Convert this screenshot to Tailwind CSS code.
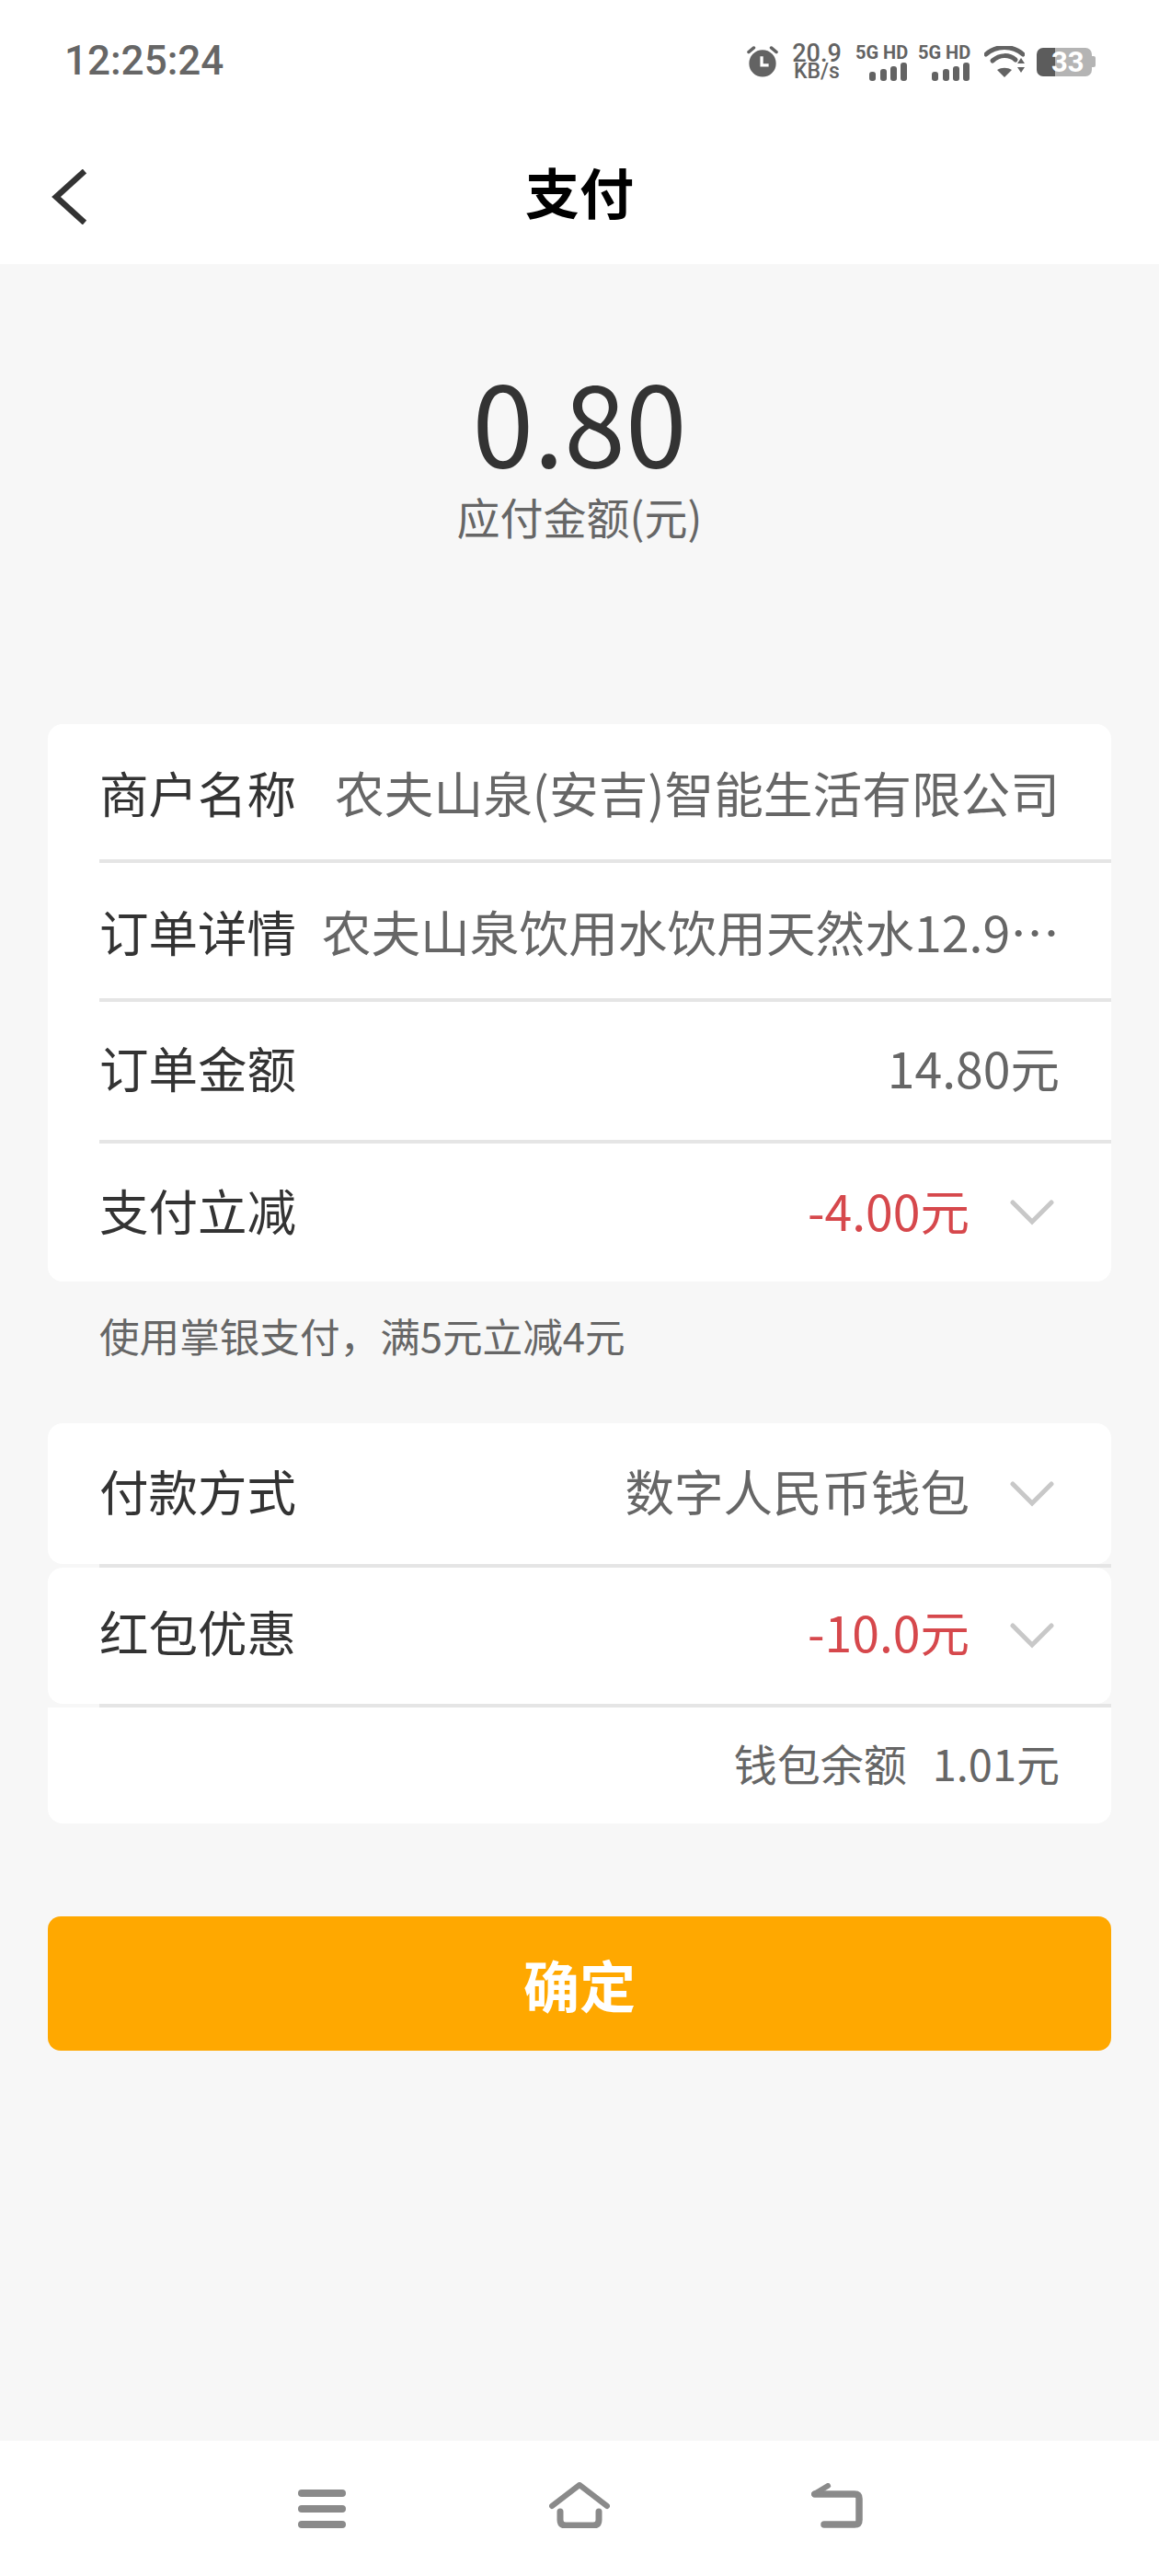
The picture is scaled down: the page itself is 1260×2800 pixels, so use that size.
<!DOCTYPE html>
<html lang="zh-CN">
<head>
  <meta charset="UTF-8" />
  <meta name="viewport" content="width=device-width, initial-scale=1" />
  <title>支付</title>
  <script src="https://cdn.jsdelivr.net/npm/@tailwindcss/browser@4"></script>
</head>
<body class="bg-[#f7f7f7] font-['Noto_Sans_CJK_SC','Noto_Sans',sans-serif]">
  <div class="w-[1260px] h-[2800px] flex flex-col overflow-hidden">
    <!-- status bar -->
    <div class="bg-white h-[132px] pl-[70px] pr-[69px] flex items-center justify-between">
      <span class="font-['Roboto',sans-serif] font-medium text-[44px] leading-none text-[#666666]">12:25:24</span>
      <div class="flex items-center text-[#636363] h-[60px] mt-[2px]">
        <svg class="w-[34px] h-[34px]" viewBox="0 0 36 36" fill="none">
          <circle cx="18" cy="20" r="15.5" fill="#636363" />
          <path d="M17 12v10h8" stroke="#fff" stroke-width="3.5" />
          <path d="M2 7l6-5M34 7l-6-5" stroke="#636363" stroke-width="3.5" stroke-linecap="round" />
        </svg>
        <div class="ml-[16px] w-[52px] flex flex-col items-center font-['Roboto',sans-serif] font-medium leading-none">
          <span class="text-[27px] h-[21px] leading-[21px]">20.9</span>
          <span class="text-[23px] h-[18px] leading-[18px]">KB/s</span>
        </div>
        <div class="ml-[16px] w-[58px] flex flex-col">
          <span class="font-['Roboto',sans-serif] font-bold text-[20px] leading-[20px] whitespace-nowrap">5G HD</span>
          <svg class="mt-[1px] ml-[15px] w-[42px] h-[20px]" viewBox="0 0 42 20" fill="#636363">
            <rect x="0" y="10" width="7" height="10" rx="3" /><rect x="12" y="7" width="7" height="13" rx="3" />
            <rect x="23" y="4" width="7" height="16" rx="3" /><rect x="34" y="0" width="7" height="20" rx="3" />
          </svg>
        </div>
        <div class="ml-[10px] w-[58px] flex flex-col">
          <span class="font-['Roboto',sans-serif] font-bold text-[20px] leading-[20px] whitespace-nowrap">5G HD</span>
          <svg class="mt-[1px] ml-[15px] w-[42px] h-[20px]" viewBox="0 0 42 20" fill="#636363">
            <rect x="0" y="10" width="7" height="10" rx="3" /><rect x="12" y="7" width="7" height="13" rx="3" />
            <rect x="23" y="4" width="7" height="16" rx="3" /><rect x="34" y="0" width="7" height="20" rx="3" />
          </svg>
        </div>
        <svg class="ml-[14px] w-[44px] h-[34px]" viewBox="0 0 44 34" fill="none">
          <path d="M2 9C13-1 31-1 42 9" stroke="#636363" stroke-width="5" stroke-linecap="round" />
          <path d="M9 16C17 9 27 9 34 15" stroke="#636363" stroke-width="5" stroke-linecap="round" />
          <path d="M14 26l8 8 8-8c-5-3-11-3-16 0z" fill="#636363" />
          <path d="M36 19l4-6 4 6zM36 23l4 6 4-6z" fill="#636363" />
        </svg>
        <div class="relative ml-[13px] w-[64px] h-[31px] flex items-center">
          <div class="w-[60px] h-[31px] rounded-[7px] overflow-hidden flex">
            <div class="w-[20px] bg-[#5c5c5c]"></div>
            <div class="flex-1 bg-[#b4b4b4]"></div>
          </div>
          <div class="w-[4px] h-[12px] rounded-r-[2px] bg-[#b4b4b4]"></div>
          <span class="absolute left-[16px] top-0 w-[30px] text-center font-['Roboto',sans-serif] font-bold text-[31px] leading-[31px] text-white">33</span>
        </div>
      </div>
    </div>

    <!-- header -->
    <div class="relative bg-white h-[155px] flex items-center justify-center">
      <svg class="absolute left-[56px] top-[52px] w-[38px] h-[60px]" viewBox="0 0 38 60" fill="none">
        <path d="M36 2L5 30l31 28" stroke="#333333" stroke-width="6.5" />
      </svg>
      <h1 class="text-[59px] leading-none font-bold text-black -mt-[4px]">支付</h1>
    </div>

    <main class="flex-1 flex flex-col">
      <!-- amount -->
      <div class="h-[500px] flex flex-col items-center pt-[106px]">
        <div class="font-normal text-[120px] leading-[126px] text-[#333333]">0.80</div>
        <div class="text-[47px] leading-[60px] text-[#666666] mt-[12px]">应付金额(元)</div>
      </div>

      <!-- order info -->
      <div class="mx-[52px] bg-white rounded-[16px] text-[#333333] text-[53.5px] leading-none">
        <div class="h-[147px] pl-[56px] pr-[56px] flex items-center justify-between">
          <span class="shrink-0">商户名称</span>
          <span class="text-[#666666] text-[53.7px] whitespace-nowrap">农夫山泉(安吉)智能生活有限公司</span>
        </div>
        <div class="ml-[56px] h-[4px] bg-[#e5e5e5]"></div>
        <div class="h-[147px] pl-[56px] pr-[56px] flex items-center justify-between">
          <span class="shrink-0">订单详情</span>
          <span class="text-[#666666] text-[53.7px] whitespace-nowrap">农夫山泉饮用水饮用天然水12.9…</span>
        </div>
        <div class="ml-[56px] h-[4px] bg-[#e5e5e5]"></div>
        <div class="h-[150px] pl-[56px] pr-[56px] pb-[8px] flex items-center justify-between">
          <span>订单金额</span>
          <span class="text-[#666666]">14.80元</span>
        </div>
        <div class="ml-[56px] h-[4px] bg-[#e5e5e5]"></div>
        <div class="h-[150px] pl-[56px] pr-[62px] pb-[6px] flex items-center justify-between">
          <span>支付立减</span>
          <div class="flex items-center gap-[44px]">
            <span class="text-[#d6484c]">-4.00元</span>
            <svg class="w-[48px] h-[28px] mt-[6px]" viewBox="0 0 48 28" fill="none"><path d="M3 3l21 21L45 3" stroke="#c8c8c8" stroke-width="5" stroke-linecap="round" /></svg>
          </div>
        </div>
      </div>

      <p class="ml-[108px] mt-[35px] mb-[73px] h-[46px] text-[43.6px] leading-[46px] text-[#666666]">使用掌银支付，满5元立减4元</p>

      <!-- payment -->
      <div class="mx-[52px] text-[#333333] text-[53.5px] leading-none">
        <div class="h-[153px] bg-white rounded-[16px] pl-[56px] pr-[62px] pb-[8px] flex items-center justify-between">
          <span>付款方式</span>
          <div class="flex items-center gap-[44px]">
            <span class="text-[#666666]">数字人民币钱包</span>
            <svg class="w-[48px] h-[28px] mt-[8px]" viewBox="0 0 48 28" fill="none"><path d="M3 3l21 21L45 3" stroke="#c8c8c8" stroke-width="5" stroke-linecap="round" /></svg>
          </div>
        </div>
        <div class="ml-[56px] h-[4px] bg-[#e5e5e5]"></div>
        <div class="h-[148px] bg-white rounded-[16px] pl-[56px] pr-[62px] pb-[10px] flex items-center justify-between">
          <span>红包优惠</span>
          <div class="flex items-center gap-[44px]">
            <span class="text-[#d6484c]">-10.0元</span>
            <svg class="w-[48px] h-[28px] mt-[10px]" viewBox="0 0 48 28" fill="none"><path d="M3 3l21 21L45 3" stroke="#c8c8c8" stroke-width="5" stroke-linecap="round" /></svg>
          </div>
        </div>
        <div class="ml-[56px] h-[4px] bg-[#e5e5e5]"></div>
        <div class="h-[126px] bg-white rounded-b-[16px] pr-[56px] pb-[8px] flex items-center justify-end gap-[28px] text-[#666666] text-[47px]">
          <span>钱包余额</span>
          <span>1.01元</span>
        </div>
      </div>

      <button class="mx-[52px] mt-[101px] h-[146px] rounded-[14px] bg-[#ffa800] text-white text-[61px] font-bold leading-none">确定</button>
    </main>

    <!-- nav bar -->
    <div class="bg-white h-[147px] relative flex items-start">
      <svg class="absolute left-[324px] top-[53px] w-[52px] h-[42px]" viewBox="0 0 52 42" fill="#8a8a8a">
        <rect width="52" height="8" rx="4" /><rect y="17" width="52" height="8" rx="4" /><rect y="34" width="52" height="8" rx="4" />
      </svg>
      <svg class="absolute left-[597px] top-[45px] w-[66px] h-[50px]" viewBox="0 0 66 50" fill="none" stroke="#8a8a8a" stroke-linecap="round">
        <path d="M3 26L33 3l30 23" stroke-width="6" stroke-linejoin="round" />
        <path d="M12 32v9c0 4 2 6 6 6h30c4 0 6-2 6-6v-9" stroke-width="7" />
      </svg>
      <svg class="absolute left-[882px] top-[46px] w-[56px] h-[49px]" viewBox="0 0 56 49" fill="none" stroke="#8a8a8a" stroke-linecap="round">
        <path d="M4 12h43c4 0 5 2 5 5v23c0 3-1 5-5 5H14" stroke-width="7.5" />
        <path d="M3 12l15-9" stroke-width="6" />
      </svg>
    </div>
  </div>
</body>
</html>
